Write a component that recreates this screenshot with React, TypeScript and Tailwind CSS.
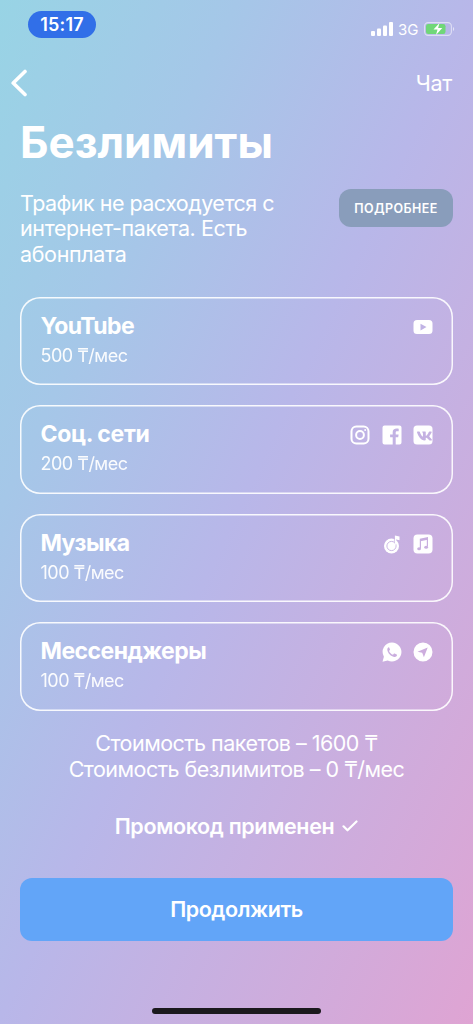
import type { ReactNode } from "react";
import { FaVk } from "react-icons/fa";

const YoutubeIcon = () => (
  <svg className="w-5 h-5" viewBox="0 0 20 20" fill="currentColor">
    <path fillRule="evenodd" d="M4 3h12q3.500 0 3.500 3.500v7q0 3.500-3.500 3.500H4Q.5 17 .5 13.500v-7Q.5 3 4 3ZM7.500 6.700v6.800l6-3.400L7.500 6.700Z" />
  </svg>
);

const InstagramIcon = () => (
  <svg className="w-5 h-5" viewBox="0 0 20 20" fill="none" stroke="currentColor" strokeWidth="2">
    <rect x="1.500" y="1.500" width="17" height="17" rx="4.800" />
    <circle cx="10" cy="10" r="3.900" />
    <circle cx="15.200" cy="4.900" r="1" fill="currentColor" stroke="none" />
  </svg>
);

const FacebookIcon = () => (
  <svg className="w-5 h-5" viewBox="0 0 20 20" fill="currentColor">
    <path d="M2.500.5h15q2 0 2 2v15q0 2-2 2h-3.800v-7.200h2.500l.4-2.900h-2.900V7.600c0-.9.400-1.400 1.500-1.400h1.500V3.700c-3.900-.6-6 .6-6 3.600v2.100H8.100v2.900h2.600v7.200H2.500q-2 0-2-2v-15q0-2 2-2Z" />
  </svg>
);

const VkIcon = () => (
  <svg className="w-5 h-5" viewBox="0 0 20 20">
    <mask id="vk">
      <rect x=".5" y=".5" width="19" height="19" rx="3.500" fill="white" />
      <FaVk x="3.500" y="3" width="13.500" height="14" color="black" />
    </mask>
    <rect width="20" height="20" fill="currentColor" mask="url(#vk)" />
  </svg>
);

const YandexMusicIcon = () => (
  <svg className="w-5 h-5" viewBox="0 0 20 20">
    <mask id="disc">
      <circle cx="9.500" cy="12" r="7.500" fill="white" />
      <circle cx="9.500" cy="12" r="4.600" fill="none" stroke="black" strokeWidth=".9" />
      <path d="M12.900 9V1.500l4.600 1.100v3.600l-3.500-.8V12Z" fill="white" />
      <path d="M12.400 4.500v4" stroke="black" strokeWidth=".7" />
    </mask>
    <rect width="20" height="20" fill="currentColor" mask="url(#disc)" />
  </svg>
);

const AppleMusicIcon = () => (
  <svg className="w-5 h-5" viewBox="0 0 20 20">
    <mask id="note">
      <rect x=".5" y=".5" width="19" height="19" rx="4" fill="white" />
      <path d="M7.400 14.500V5.300l7-1.500v9M7.400 6.600l7-1.500" fill="none" stroke="black" strokeWidth="1.200" />
      <ellipse cx="6.100" cy="14.800" rx="1.900" ry="1.500" fill="black" />
      <ellipse cx="13.100" cy="13.200" rx="1.900" ry="1.500" fill="black" />
    </mask>
    <rect width="20" height="20" fill="currentColor" mask="url(#note)" />
  </svg>
);

const WhatsappIcon = () => (
  <svg className="w-5 h-5" viewBox="0 0 20 20" fill="currentColor">
    <path fillRule="evenodd" d="M10 .5a9.500 9.500 0 1 1-4.300 18L.5 19.700l1.400-4.900A9.500 9.500 0 0 1 10 .5ZM6.900 5.300c-1.200.4-1.800 1.500-1.500 2.900.7 3.300 3.500 6 6.700 6.700 1.500.3 2.500-.3 2.900-1.600.1-.4 0-.6-.4-.8l-2-.9c-.4-.2-.6-.1-.8.2l-.8 1c-1.900-.7-3.200-2-4-3.800l.8-.9c.2-.3.3-.5.100-.8l-.8-1.800c-.1-.2-.1-.3-.2-.2Z" />
  </svg>
);

const TelegramIcon = () => (
  <svg className="w-5 h-5" viewBox="0 0 20 20" fill="currentColor">
    <path fillRule="evenodd" d="M10 .5a9.500 9.500 0 1 1 0 19 9.500 9.500 0 0 1 0-19ZM14.700 5.500 4.500 9.800l4.700.9 1.700 4.600 3.800-9.800Z" />
  </svg>
);

const StatusBar = () => (
  <div className="h-[58px] pl-7 pr-[18px] pt-[11px] flex items-start justify-between">
    <div className="w-[68px] h-[27px] rounded-full bg-[#316fe8] flex items-center justify-center text-[18px] font-semibold tracking-[0.200px]">15:17</div>
    <div className="pt-[11px] h-[25px] flex items-start">
      <svg className="w-[22px] h-[14px]" viewBox="0 0 22 14" fill="currentColor">
        <rect x="0" y="9" width="4" height="5" rx="1" />
        <rect x="6" y="6.500" width="4" height="7.500" rx="1" />
        <rect x="12" y="3.500" width="4" height="10.500" rx="1" />
        <rect x="18" y="0" width="4" height="14" rx="1" />
      </svg>
      <span className="ml-[5px] w-[21px] pt-px text-[15px] leading-[14px]">3G</span>
      <svg className="ml-[5px] w-[31px] h-[14px]" viewBox="0 0 31 14">
        <rect x=".6" y=".6" width="26.800" height="12.800" rx="3.600" fill="none" stroke="white" strokeOpacity=".55" strokeWidth="1.100" />
        <rect x="2" y="2" width="19.500" height="10" rx="2.300" fill="#70d779" />
        <path d="M29 5v4q1.200-.5 1.200-2T29 5Z" fill="white" fillOpacity=".6" />
        <path d="M15.500 1 9.500 7.500h4L12 13l6.300-7h-4.200l1.400-5Z" fill="white" />
      </svg>
    </div>
  </div>
);

type ServiceProps = {
  title: string;
  price: number;
  titleClass: string;
  icons: ReactNode;
};

const Service = ({ title, price, titleClass, icons }: ServiceProps) => (
  <div className="h-[88.500px] pt-[15px] pl-[20.500px] pr-5 flex justify-between rounded-[20px] shadow-[inset_0_0_0_1.500px_rgba(255,255,255,0.9)]">
    <div>
      <h2 className={`text-[23px] leading-7 font-bold whitespace-nowrap ${titleClass}`}>{title}</h2>
      <p className="mt-1 text-[18px] leading-6 opacity-95 tracking-[-0.500px]">{price} ₸/мес</p>
    </div>
    <div className="h-5 mt-[5px] flex gap-[11.500px]">{icons}</div>
  </div>
);

export default function App() {
  return (
    <main className="w-[473px] h-[1024px] overflow-hidden flex flex-col bg-[linear-gradient(115deg,#98d4e5_0%,#a5c7e8_25%,#b8b7e9_50%,#dfa4d3_100%)] text-white font-['Inter',sans-serif]">
      <StatusBar />
      <nav className="h-[50px] pl-[10px] pr-[21px] flex items-center justify-between">
        <svg className="w-[18px] h-7" viewBox="0 0 18 28" fill="none" stroke="currentColor" strokeWidth="3.600" strokeLinecap="round" strokeLinejoin="round">
          <path d="M15 2.500 3.200 14 15 25.500" />
        </svg>
        <span className="text-[21.500px] tracking-[-0.300px]">Чат</span>
      </nav>

      <div className="px-5">
        <h1 className="mt-[6px] h-14 text-[44px] leading-14 font-bold whitespace-nowrap">Безлимиты</h1>
        <div className="mt-[19px] h-[107.500px] flex justify-between items-start">
          <p className="pt-[1.500px] text-[21.500px] leading-[25.500px] tracking-[-0.520px] whitespace-nowrap">
            Трафик не расходуется с<br />
            <span className="tracking-[-0.400px]">интернет-пакета. Есть</span><br />
            <span className="tracking-[-0.350px]">абонплата</span>
          </p>
          <button className="w-[114px] h-[38px] pt-[3px] shrink-0 rounded-xl bg-[#899dbb] text-[12.500px] font-semibold tracking-[0.400px]">ПОДРОБНЕЕ</button>
        </div>

        <section className="flex flex-col gap-5">
          <Service title="YouTube" price={500} titleClass="tracking-[-0.600px]" icons={<YoutubeIcon />} />
          <Service title="Соц. сети" price={200} titleClass="tracking-[-0.350px]" icons={<><InstagramIcon /><FacebookIcon /><VkIcon /></>} />
          <Service title="Музыка" price={100} titleClass="tracking-[-0.550px]" icons={<><YandexMusicIcon /><AppleMusicIcon /></>} />
          <Service title="Мессенджеры" price={100} titleClass="tracking-[-0.550px]" icons={<><WhatsappIcon /><TelegramIcon /></>} />
        </section>

        <div className="mt-[20.500px] text-center text-[21.500px] leading-[25.500px] tracking-[-0.530px] whitespace-nowrap">
          <p>Стоимость пакетов – 1600 ₸</p>
          <p>Стоимость безлимитов – 0 ₸/мес</p>
        </div>
        <div className="mt-7 h-8 flex items-center justify-center text-[21.500px] font-semibold tracking-[-0.350px] whitespace-nowrap">
          Промокод применен
          <svg className="ml-2 w-4 h-3" viewBox="0 0 16 12" fill="none" stroke="currentColor" strokeWidth="2.200" strokeLinecap="round" strokeLinejoin="round">
            <path d="M1.500 6.300 5.500 10.300 14.500 1.500" />
          </svg>
        </div>
        <button className="mt-9 w-full h-[63px] rounded-xl bg-[#62a5f8] text-[21.500px] font-semibold tracking-[-0.450px]">Продолжить</button>
      </div>
      <div className="mt-auto mb-[10px] mx-auto w-[169px] h-[6px] rounded-full bg-[#1b191d]" />
    </main>
  );
}
